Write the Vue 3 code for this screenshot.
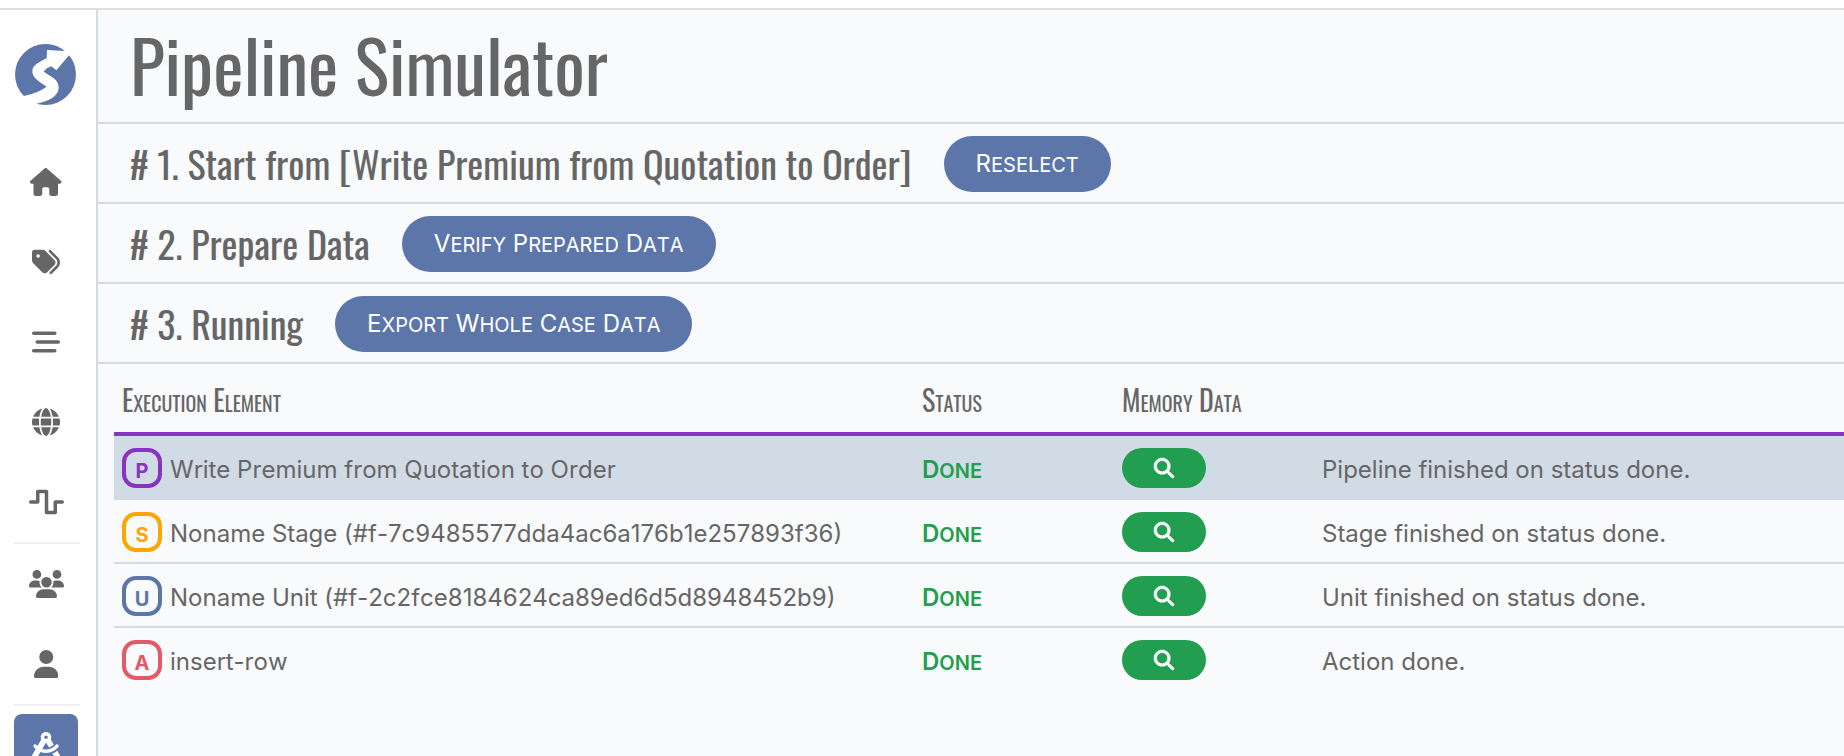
<script setup>
const icons = {
  home: { w: 576, d: 'M575.8 255.5c0 18-15 32.1-32 32.1h-32l.7 160.2c0 2.7-.2 5.4-.5 8.1V472c0 22.1-17.9 40-40 40H456c-1.1 0-2.2 0-3.3-.1c-1.4 .1-2.8 .1-4.2 .1H416 392c-22.1 0-40-17.9-40-40V448 384c0-17.7-14.3-32-32-32H256c-17.7 0-32 14.3-32 32v64 24c0 22.1-17.9 40-40 40H160 128.1c-1.5 0-3-.1-4.5-.2c-1.2 .1-2.4 .2-3.6 .2H104c-22.1 0-40-17.9-40-40V360c0-.9 0-1.9 .1-2.8V287.6H32c-18 0-32-14-32-32.1c0-9 3-17 10-24L266.4 8c7-7 15-8 22-8s15 2 21 7L564.8 231.5c8 7 12 15 11 24z' },
  tags: { w: 512, d: 'M345 39.1L472.8 168.4c52.4 53 52.4 138.2 0 191.2L360.8 472.9c-9.3 9.4-24.5 9.5-33.9 .2s-9.5-24.5-.2-33.9L438.6 325.9c33.9-34.3 33.9-89.4 0-123.7L310.9 72.9c-9.3-9.4-9.2-24.6 .2-33.9s24.6-9.2 33.9 .2zM0 229.5V80C0 53.5 21.5 32 48 32H197.5c17 0 33.3 6.7 45.3 18.7l168 168c25 25 25 65.5 0 90.5L277.3 442.7c-25 25-65.5 25-90.5 0l-168-168C6.7 262.7 0 246.5 0 229.5zM144 144a32 32 0 1 0 -64 0 32 32 0 1 0 64 0z' },
  bars: { w: 512, d: 'M0 96C0 78.3 14.3 64 32 64H416c17.7 0 32 14.3 32 32s-14.3 32-32 32H32C14.3 128 0 113.7 0 96zM64 256c0-17.7 14.3-32 32-32H480c17.7 0 32 14.3 32 32s-14.3 32-32 32H96c-17.7 0-32-14.3-32-32zM448 416c0 17.7-14.3 32-32 32H32c-17.7 0-32-14.3-32-32s14.3-32 32-32H416c17.7 0 32 14.3 32 32z' },
  globe: { w: 512, d: 'M352 256c0 22.2-1.2 43.6-3.3 64H163.3c-2.2-20.4-3.3-41.8-3.3-64s1.2-43.6 3.3-64H348.7c2.2 20.4 3.3 41.8 3.3 64zm28.8-64H503.9c5.3 20.5 8.1 41.9 8.1 64s-2.8 43.5-8.1 64H380.8c2.1-20.6 3.2-42 3.2-64s-1.1-43.4-3.2-64zm112.6-32H376.7c-10-63.9-29.8-117.4-55.3-151.6c78.3 20.7 142 77.5 171.9 151.6zm-149.1 0H167.7c6.1-36.4 15.5-68.6 27-94.7c10.5-23.6 22.2-40.7 33.5-51.5C239.4 3.2 248.7 0 256 0s16.6 3.2 27.8 13.8c11.3 10.8 23 27.9 33.5 51.5c11.6 26 20.9 58.2 27 94.7zm-209 0H18.6C48.6 85.9 112.2 29.1 190.6 8.4C165.1 42.6 145.3 96.1 135.3 160zM8.1 192H131.2c-2.1 20.6-3.2 42-3.2 64s1.1 43.4 3.2 64H8.1C2.8 299.5 0 278.1 0 256s2.8-43.5 8.1-64zM194.7 446.6c-11.6-26-20.9-58.2-27-94.6H344.3c-6.1 36.4-15.5 68.6-27 94.6c-10.5 23.6-22.2 40.7-33.5 51.5C272.6 508.8 263.3 512 256 512s-16.6-3.2-27.8-13.8c-11.3-10.8-23-27.9-33.5-51.5zM135.3 352c10 63.9 29.8 117.4 55.3 151.6C112.2 482.9 48.6 426.1 18.6 352H135.3zm358.1 0c-30 74.1-93.6 130.9-171.9 151.6c25.5-34.2 45.2-87.7 55.3-151.6H493.4z' },
  wave: { w: 640, d: 'M128 64c0-17.7 14.3-32 32-32H320c17.7 0 32 14.3 32 32V416h96V256c0-17.7 14.3-32 32-32H608c17.7 0 32 14.3 32 32s-14.3 32-32 32H512V448c0 17.7-14.3 32-32 32H320c-17.7 0-32-14.3-32-32V96H192V256c0 17.7-14.3 32-32 32H32c-17.7 0-32-14.3-32-32s14.3-32 32-32h96V64z' },
  users: { w: 640, d: 'M144 0a80 80 0 1 1 0 160A80 80 0 1 1 144 0zM512 0a80 80 0 1 1 0 160A80 80 0 1 1 512 0zM0 298.7C0 239.8 47.8 192 106.7 192h42.7c15.9 0 31 3.5 44.6 9.7c-1.3 7.2-1.9 14.7-1.9 22.3c0 38.2 16.8 72.5 43.3 96c-.2 0-.4 0-.7 0H21.3C9.6 320 0 310.4 0 298.7zM405.3 320c-.2 0-.4 0-.7 0c26.6-23.5 43.3-57.8 43.3-96c0-7.6-.7-15-1.9-22.3c13.6-6.3 28.7-9.7 44.6-9.7h42.7C592.2 192 640 239.8 640 298.7c0 11.8-9.6 21.3-21.3 21.3H405.3zM224 224a96 96 0 1 1 192 0 96 96 0 1 1 -192 0zM128 485.3C128 411.7 187.7 352 261.3 352H378.7C452.3 352 512 411.7 512 485.3c0 14.7-11.9 26.7-26.7 26.7H154.7c-14.7 0-26.7-11.9-26.7-26.7z' },
  user: { w: 448, d: 'M224 256A128 128 0 1 0 224 0a128 128 0 1 0 0 256zm-45.7 48C79.8 304 0 383.8 0 482.3C0 498.7 13.3 512 29.7 512H418.3c16.4 0 29.7-13.3 29.7-29.7C448 383.8 368.2 304 269.7 304H178.3z' },
  compass: { w: 512, d: 'M352 96c0 14.3-3.1 27.9-8.8 40.2L396 227.4c-23.7 25.3-54.2 44.1-88.5 53.6L256 192h0 0l-68 117.5c21.5 6.8 44.3 10.5 68.1 10.5c70.7 0 133.8-32.7 174.9-84c11.1-13.8 31.2-16 45-5s16 31.2 5 45C428.1 341.8 347 384 256 384c-35.4 0-69.4-6.4-100.7-18.1L98.7 463.7C94 471.8 87 478.4 78.6 482.6L23.2 510.3c-5 2.5-10.9 2.2-15.6-.7S0 501.5 0 496V440.6c0-8.4 2.2-16.7 6.5-24.1l60-103.7C53.7 301.6 41.8 289.3 31.2 276c-11.1-13.8-8.8-33.9 5-45s33.9-8.8 45 5c5.7 7.1 11.8 13.8 18.2 20.1l69.4-119.9c-5.6-12.2-8.8-25.8-8.8-40.2c0-53 43-96 96-96s96 43 96 96zm21 297.9c32.6-12.8 62.5-30.8 88.9-52.9l43.7 75.5c4.2 7.3 6.5 15.6 6.5 24.1V496c0 5.5-2.9 10.7-7.6 13.6s-10.6 3.2-15.6 .7l-55.4-27.7c-8.4-4.2-15.4-10.8-20.1-18.9L373 393.9zM256 128a32 32 0 1 0 0-64 32 32 0 1 0 0 64z' },
}

const groups = [
  [
    { icon: 'home', label: 'Home' },
    { icon: 'tags', label: 'Tags' },
    { icon: 'bars', label: 'Enumerations' },
    { icon: 'globe', label: 'Spaces' },
    { icon: 'wave', label: 'Pipelines' },
  ],
  [
    { icon: 'users', label: 'User groups' },
    { icon: 'user', label: 'Users' },
  ],
  [{ icon: 'compass', label: 'Simulator', active: true }],
]

const steps = [
  { title: '# 1. Start from [Write Premium from Quotation to Order]', action: 'Reselect' },
  { title: '# 2. Prepare Data', action: 'Verify Prepared Data' },
  { title: '# 3. Running', action: 'Export Whole Case Data' },
]

const rows = [
  { type: 'P', name: 'Write Premium from Quotation to Order', message: 'Pipeline finished on status done.' },
  { type: 'S', name: 'Noname Stage (#f-7c9485577dda4ac6a176b1e257893f36)', message: 'Stage finished on status done.' },
  { type: 'U', name: 'Noname Unit (#f-2c2fce8184624ca89ed6d5d8948452b9)', message: 'Unit finished on status done.' },
  { type: 'A', name: 'insert-row', message: 'Action done.' },
]
</script>

<template>
  <div class="app">
    <nav class="sidebar" aria-label="Main">
      <a class="logo" href="#" aria-label="Console">
        <svg viewBox="0 0 183 183" aria-hidden="true">
          <circle cx="91.5" cy="91.5" r="91.5" fill="#5d76aa" />
          <path
            fill="#fff"
            d="M96 18 L151 21 L178 6 L181 20 L162 34 L124 79 L109 67 Q96 70 86 82 C97 94 131 103 131 130 C131 158 102 171 65 179 L20 190 L15 158 L27 156 Q68 147 95 128 C72 112 52 103 52 82 C52 62 74 54 95 43 Z"
          />
        </svg>
      </a>
      <div v-for="(group, i) in groups" :key="i" class="group">
        <a
          v-for="item in group"
          :key="item.icon"
          class="item"
          :class="{ active: item.active }"
          href="#"
          :aria-label="item.label"
        >
          <svg :viewBox="`0 0 ${icons[item.icon].w} 512`" aria-hidden="true">
            <path :d="icons[item.icon].d" />
          </svg>
        </a>
      </div>
    </nav>

    <main class="content">
      <h1>Pipeline Simulator</h1>
      <section v-for="step in steps" :key="step.title" class="step">
        <h2>{{ step.title }}</h2>
        <button type="button" class="action">
          <template v-for="word in step.action.split(' ')" :key="word"><span class="caps">{{ word }}</span>{{ ' ' }}</template>
        </button>
      </section>

      <div class="result">
        <table>
          <colgroup>
            <col class="col-name" />
            <col class="col-fact" />
            <col class="col-fact" />
            <col />
          </colgroup>
          <thead>
            <tr>
              <th scope="col">Execution Element</th>
              <th scope="col">Status</th>
              <th scope="col">Memory Data</th>
              <td></td>
            </tr>
          </thead>
          <tbody>
            <tr v-for="row in rows" :key="row.type" :class="`type-${row.type.toLowerCase()}`">
              <td>
                <div class="name">
                  <span class="badge">{{ row.type }}</span>
                  <span>{{ row.name }}</span>
                </div>
              </td>
              <td><div class="text status"><span class="caps">Done</span></div></td>
              <td>
                <button type="button" class="search" aria-label="View memory data">
                  <svg viewBox="0 0 512 512" aria-hidden="true">
                    <path d="M416 208c0 45.9-14.9 88.3-40 122.7L502.6 457.4c12.5 12.5 12.5 32.8 0 45.3s-32.8 12.5-45.3 0L330.7 376c-34.4 25.2-76.8 40-122.7 40C93.1 416 0 322.9 0 208S93.1 0 208 0S416 93.1 416 208zM208 352a144 144 0 1 0 0-288 144 144 0 1 0 0 288z" />
                  </svg>
                </button>
              </td>
              <td><div class="text">{{ row.message }}</div></td>
            </tr>
          </tbody>
        </table>
      </div>
    </main>
  </div>
</template>

<style>
body {
  background: #fff;
  overflow: hidden;
}
</style>

<style scoped>
.app {
  --line: #d1dbe6;
  --primary: #5d76aa;
  --success: #219e50;
  box-sizing: border-box;
  display: flex;
  height: 100vh;
  margin-top: 8px;
  border-top: 2px solid #ddd;
  overflow: hidden;
  color: #666;
  font: 24px/32px Inter, Roboto, sans-serif;
  font-kerning: none;
}

.sidebar {
  box-sizing: border-box;
  flex: 0 0 98px;
  border-right: 2px solid var(--line);
  background: #fff;
}

.logo {
  display: block;
  padding: 34px 0 37px 15px;
}

.logo svg {
  display: block;
  width: 61px;
  height: 61px;
}

.group {
  display: flex;
  flex-direction: column;
  gap: 16px;
  margin: 0 16px 0 14px;
  padding: 8px 0;
}

.group + .group {
  border-top: 2px solid #efeff7;
}

.item {
  display: flex;
  align-items: center;
  justify-content: center;
  width: 64px;
  height: 64px;
  border-radius: 8px;
  color: #666;
}

.item svg {
  height: 28px;
  fill: currentColor;
}

.item.active {
  background: var(--primary);
  color: #fff;
}

.content {
  flex: 1;
  min-width: 0;
  background: #f9fafc;
}

h1,
h2,
th {
  font-family: Oswald, 'Roboto Condensed', sans-serif;
  font-weight: 400;
}

h1 {
  margin: 0;
  padding: 0 32px 4px;
  border-bottom: 2px solid var(--line);
  font-size: 72px;
  line-height: 108px;
}

.step {
  display: flex;
  align-items: center;
  gap: 32px;
  padding: 12px 32px 10px;
  border-bottom: 2px solid var(--line);
}

h2 {
  margin: 0;
  padding-bottom: 2px;
  font-size: 38px;
  font-variant-numeric: tabular-nums;
  line-height: 54px;
}

.action {
  height: 56px;
  padding: 0 32px;
  border: 0;
  border-radius: 28px;
  background: var(--primary);
  color: #fff;
  font: inherit;
  font-kerning: none;
}

.caps {
  display: inline-block;
  font-size: 20px;
  line-height: 24px;
  text-transform: uppercase;
}

.caps::first-letter {
  font-size: 24px;
}

.result {
  padding-left: 16px;
}

table {
  width: 100%;
  border-collapse: collapse;
  table-layout: fixed;
}

.col-name {
  width: 800px;
}

.col-fact {
  width: 200px;
}

th,
td {
  padding: 0 8px;
  text-align: left;
}

th {
  height: 64px;
  padding-top: 4px;
  font-size: 28px;
  font-variant: small-caps;
}

tbody tr {
  height: 64px;
  box-shadow: inset 0 -2px var(--line);
}

tbody tr:last-child {
  box-shadow: none;
}

tbody tr.type-p {
  height: 68px;
  background: var(--line);
  box-shadow: inset 0 4px #8a33c2;
}

tbody tr.type-p td {
  padding-top: 4px;
}

.name {
  display: flex;
  align-items: baseline;
  gap: 8px;
}

.badge {
  box-sizing: border-box;
  width: 40px;
  height: 40px;
  padding-top: 3px;
  border: 4px solid currentColor;
  border-radius: 14px;
  font-size: 20px;
  font-weight: 700;
  line-height: 32px;
  text-align: center;
}

.type-p .badge {
  color: #8a33c2;
}

.type-s .badge {
  color: #ffa500;
}

.type-u .badge {
  color: var(--primary);
}

.type-a .badge {
  color: #e05a67;
}

.text {
  padding-top: 4px;
}

.status {
  color: var(--success);
  font-weight: 600;
}

.search {
  display: flex;
  align-items: center;
  justify-content: center;
  width: 84px;
  height: 40px;
  padding: 0;
  border: 0;
  border-radius: 20px;
  background: var(--success);
  color: #fff;
}

.search svg {
  width: 20px;
  height: 20px;
  overflow: visible;
  fill: currentColor;
  stroke: currentColor;
  stroke-width: 16;
}
</style>
